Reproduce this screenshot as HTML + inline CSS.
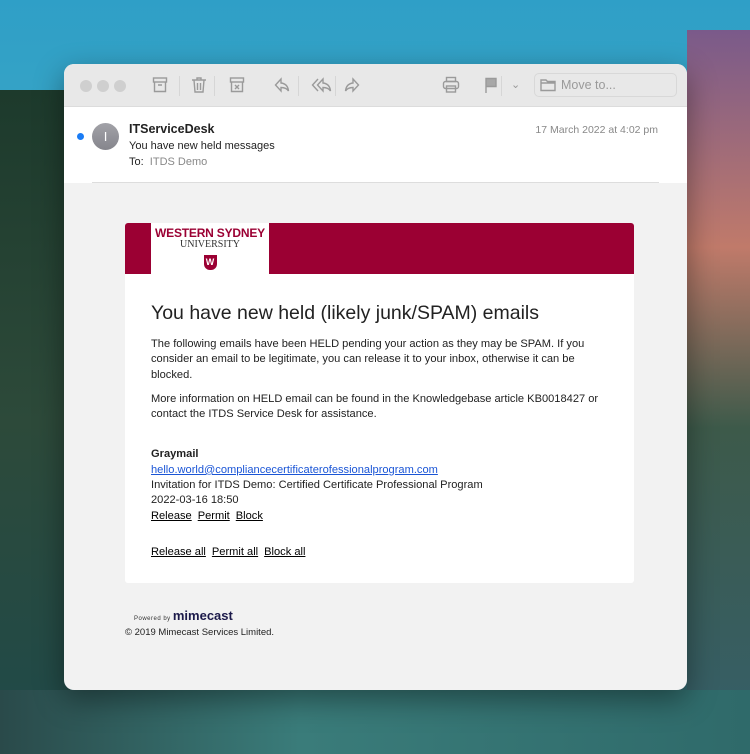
<!DOCTYPE html>
<html><head><meta charset="utf-8"><style>
*{margin:0;padding:0;box-sizing:border-box}
body{width:750px;height:754px;overflow:hidden;position:relative;font-family:"Liberation Sans",sans-serif;
background:linear-gradient(180deg,#2f9fc7 0%,#3aa6c4 25%,#4d6e88 45%,#3c4f63 70%,#2d6f70 100%)}
.bg{position:absolute}
.win{position:absolute;left:64px;top:64px;width:623px;height:626px;border-radius:10px;background:#f2f2f2;overflow:hidden;box-shadow:0 10px 30px rgba(0,0,0,.4)}
.tb{height:43px;background:#e8e8e8;position:relative;border-bottom:1px solid #dcdcdc}
.dot{position:absolute;top:16px;width:12px;height:12px;border-radius:50%;background:#cfcfcf}
.ic{position:absolute;top:12px}
.sep{position:absolute;top:12px;width:1px;height:20px;background:#d6d6d6}
.move{position:absolute;left:470px;top:9px;width:143px;height:24px;border:1px solid #d8d8d8;border-radius:5px;color:#9a9a9a;font-size:12.5px;padding:4px 0 0 26px}
.hd{height:76px;background:#fff;position:relative}
.hd .line{position:absolute;left:28px;right:28px;bottom:0;height:1px;background:#ddd}
.card{position:absolute;left:61px;top:159px;width:509px;height:360px;background:#fff;border-radius:3px;overflow:hidden}
.ban{height:51px;background:#9b0033;position:relative}
.logo{position:absolute;left:26px;top:0;width:118px;height:51px;background:#fff;text-align:center}
p{font-size:11.1px;line-height:15.3px;color:#222}
a{color:#1a55d6}
.k{color:#000;text-decoration:underline;margin-right:6px}
svg{fill:none;stroke:#9a9a9a;stroke-width:1.4}
</style></head><body>
<div class="bg" style="left:0;top:90px;width:70px;height:664px;background:linear-gradient(180deg,#1d3a2c,#2d4a3a 50%,#1f4a4a);"></div>
<div class="bg" style="left:687px;top:30px;width:63px;height:724px;background:linear-gradient(180deg,#7a5a8a,#c07a6a 30%,#3d5a4a 55%,#355f6a)"></div>
<div class="bg" style="left:0;top:690px;width:750px;height:64px;background:linear-gradient(90deg,#2a4a4a,#3a7c7a 40%,#2f6a6a)"></div>
<div class="win">
 <div class="tb">
  <div class="dot" style="left:16px"></div><div class="dot" style="left:33px"></div><div class="dot" style="left:50px"></div>
  <svg class="ic" style="left:88px" width="16" height="18" viewBox="0 0 16 18"><rect x="1.5" y="2" width="13" height="4"/><path d="M2.5 6v9.5h11V6M6 9h4"/></svg>
  <div class="sep" style="left:115px"></div>
  <svg class="ic" style="left:127px" width="16" height="18" viewBox="0 0 16 18"><path d="M1 4h14M6 4V2h4v2M3 4l1 12h8l1-12M6.5 7v7M9.5 7v7"/></svg>
  <div class="sep" style="left:150px"></div>
  <svg class="ic" style="left:165px" width="16" height="18" viewBox="0 0 16 18"><rect x="1.5" y="2" width="13" height="4"/><path d="M2.5 6v9.5h11V6M6 9l4 4M10 9l-4 4"/></svg>
  <svg class="ic" style="left:210px" width="16" height="18" viewBox="0 0 16 18"><path d="M7 3L1.5 9 7 15V11.5c4 0 6 1 7.5 3.5-.5-4.5-3-7.5-7.5-8z"/></svg>
  <div class="sep" style="left:234px"></div>
  <svg class="ic" style="left:247px" width="22" height="18" viewBox="0 0 22 18"><path d="M7 3L1.5 9 7 15"/><path d="M12 3L6.5 9 12 15V11.5c4 0 6 1 7.5 3.5-.5-4.5-3-7.5-7.5-8z"/></svg>
  <div class="sep" style="left:271px"></div>
  <svg class="ic" style="left:280px" width="16" height="18" viewBox="0 0 16 18"><path d="M9 3l5.5 6L9 15V11.5c-4 0-6 1-7.5 3.5.5-4.5 3-7.5 7.5-8z"/></svg>
  <svg class="ic" style="left:378px" width="18" height="18" viewBox="0 0 18 18"><rect x="4.5" y="1.5" width="9" height="4"/><rect x="1.5" y="5.5" width="15" height="7" rx="2"/><rect x="4.5" y="10" width="9" height="6"/></svg>
  <svg class="ic" style="left:420px" width="14" height="18" viewBox="0 0 14 18"><path d="M2 2v15M2 2.5h10v8H2z" style="fill:#a8a8a8"/></svg>
  <div class="sep" style="left:437px"></div>
  <span class="ic" style="left:447px;font-size:11px;top:14px;color:#999">⌄</span>
  <div class="move"><svg style="position:absolute;left:5px;top:4px" width="16" height="14" viewBox="0 0 16 14"><path d="M1 2h5l1.5 1.5H15V12.5H1zM1 5h14"/></svg>Move to...</div>
 </div>
 <div class="hd">
  <div style="position:absolute;left:13px;top:26px;width:7px;height:7px;border-radius:50%;background:#1a7cf5"></div>
  <div style="position:absolute;left:28px;top:16px;width:27px;height:27px;border-radius:50%;background:linear-gradient(#a2a2a8,#85858c);color:#fff;font-size:13px;text-align:center;line-height:27px">I</div>
  <div style="position:absolute;left:65px;top:15px;font-size:12.5px;font-weight:bold;color:#222">ITServiceDesk</div>
  <div style="position:absolute;left:65px;top:33px;font-size:11px;color:#222">You have new held messages</div>
  <div style="position:absolute;left:65px;top:49px;font-size:11px;color:#222">To: <span style="color:#888">&nbsp;ITDS Demo</span></div>
  <div style="position:absolute;right:29px;top:17px;font-size:10.5px;color:#888">17 March 2022 at 4:02 pm</div>
  <div class="line"></div>
 </div>
 <div class="card">
  <div class="ban"><div class="logo">
   <div style="color:#9b0033;font-weight:bold;font-size:12px;padding-top:3px;letter-spacing:-.2px">WESTERN SYDNEY</div>
   <div style="font-family:'Liberation Serif',serif;font-size:10px;color:#333;line-height:10px">UNIVERSITY</div>
   <div style="margin:5px auto 0;width:13px;height:15px;background:#9b0033;border-radius:0 0 6px 6px;color:#fff;font-size:9px;font-weight:bold;line-height:15px">W</div>
  </div></div>
  <div style="padding:28px 26px 0">
   <div style="font-size:19.5px;color:#222;margin-bottom:12px">You have new held (likely junk/SPAM) emails</div>
   <p>The following emails have been HELD pending your action as they may be SPAM. If you consider an email to be legitimate, you can release it to your inbox, otherwise it can be blocked.</p>
   <p style="margin-top:9px">More information on HELD email can be found in the Knowledgebase article KB0018427 or contact the ITDS Service Desk for assistance.</p>
   <p style="margin-top:25px;font-weight:bold">Graymail</p>
   <p><a href="#">hello.world@compliancecertificaterofessionalprogram.com</a></p>
   <p>Invitation for ITDS Demo: Certified Certificate Professional Program</p>
   <p>2022-03-16 18:50</p>
   <p><span class="k">Release</span><span class="k">Permit</span><span class="k">Block</span></p>
   <p style="margin-top:21px"><span class="k">Release all</span><span class="k">Permit all</span><span class="k">Block all</span></p>
  </div>
 </div>
 <div style="position:absolute;left:70px;top:544px;font-size:6px;color:#333;letter-spacing:.5px">Powered by <span style="font-size:13px;font-weight:bold;color:#1c1a4a;letter-spacing:0">mimecast</span></div>
 <div style="position:absolute;left:61px;top:563px;font-size:9.5px;color:#222">© 2019 Mimecast Services Limited.</div>
</div>
</body></html>
